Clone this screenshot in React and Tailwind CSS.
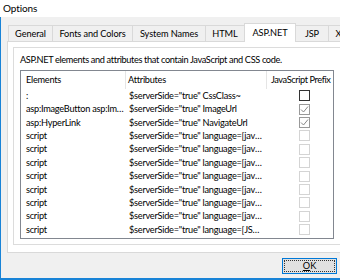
import React from 'react';

const font = { fontFamily: 'Lato, "Noto Sans", sans-serif' };

const tabs = [
  { t: 'General', w: 'w-[45px]' },
  { t: 'Fonts and Colors', w: 'w-[81px]' },
  { t: 'System Names', w: 'w-[74px]' },
  { t: 'HTML', w: 'w-[40px]' },
  { t: 'ASP.NET', w: 'w-[52px]' },
  { t: 'JSP', w: 'w-[34px]' },
  { t: 'XML', w: 'w-[34px]' },
];

const rows = [
  { el: ':', attr: '$serverSide="true" CssClass~', state: 'empty' },
  { el: 'asp:ImageButton asp:ImageMap', attr: '$serverSide="true" ImageUrl', state: 'checked' },
  { el: 'asp:HyperLink', attr: '$serverSide="true" NavigateUrl', state: 'checked' },
  { el: 'script', attr: '$serverSide="true" language=[javascript]', state: 'off' },
  { el: 'script', attr: '$serverSide="true" language=[javascript]', state: 'off' },
  { el: 'script', attr: '$serverSide="true" language=[javascript]', state: 'off' },
  { el: 'script', attr: '$serverSide="true" language=[javascript]', state: 'off' },
  { el: 'script', attr: '$serverSide="true" language=[javascript]', state: 'off' },
  { el: 'script', attr: '$serverSide="true" language=[javascript]', state: 'off' },
  { el: 'script', attr: '$serverSide="true" language=[javascript]', state: 'off' },
  { el: 'script', attr: '$serverSide="true" language=[JScript]', state: 'off' },
];

function Checkbox({ state }) {
  if (state === 'off') {
    return <div className="w-[11px] h-[11px] border border-[#d4d4d4] bg-white" />;
  }
  return (
    <div className={`w-[11px] h-[11px] border bg-white flex items-center justify-center ${state === 'checked' ? 'border-[#999999]' : 'border-[#333333]'}`}>
      {state === 'checked' && (
        <svg width="9" height="9" viewBox="0 0 9 9">
          <path d="M1 4.5 L3.5 7 L8 1.5" fill="none" stroke="#888888" strokeWidth="1" />
        </svg>
      )}
    </div>
  );
}

export default function App() {
  return (
    <div className="w-[340px] h-[280px] overflow-hidden bg-[#f0f0f0] text-[9.2px] tracking-[-0.1px] text-black whitespace-nowrap" style={font}>
      <div className="h-[17px] bg-white flex items-center pl-[3px] text-[10px]">Options</div>
      <div className="h-[263px] border-l border-b-2 border-[#1883d7] flex flex-col">
        {/* tab strip */}
        <div className="flex items-end pl-[7px] pt-[6px] h-[24px]">
          {tabs.map(({ t, w }) => {
            const active = t === 'ASP.NET';
            return (
              <div
                key={t}
                className={`shrink-0 ${w} flex items-center justify-center border-t border-l border-r border-[#d9d9d9] -mr-px ${
                  active ? 'h-[19px] bg-white relative z-10 -mb-px' : 'h-[16px] bg-[#f0f0f0]'
                }`}
              >
                {t}
              </div>
            );
          })}
        </div>
        {/* panel */}
        <div className="ml-[6px] w-[345px] h-[212px] bg-white border border-[#d9d9d9] pt-[5px] pl-[5px]">
          <div className="w-[340px] h-[198px] border border-[#dcdcdc] pl-[6px] pt-[3px]">
            <div className="h-[17px] flex items-center tracking-[-0.35px]">ASP.NET elements and attributes that contain JavaScript and CSS code.</div>
            <div className="mt-[2px] w-[314px] h-[169px] border border-[#828790] bg-white tracking-[-0.25px] overflow-hidden">
              <div className="h-[18px] flex items-center">
                <div className="w-[105px] shrink-0 pl-[5px] border-r border-[#e5e5e5] h-full flex items-center">Elements</div>
                <div className="w-[141px] shrink-0 pl-[2px] border-r border-[#e5e5e5] h-full flex items-center">Attributes</div>
                <div className="pl-[4px] h-full flex items-center tracking-[-0.4px]">JavaScript Prefix</div>
              </div>
              {rows.map((r, i) => (
                <div key={i} className="h-[13.4px] flex items-center">
                  <div className="w-[105px] shrink-0 pl-[5px] pr-[2px] truncate">{r.el}</div>
                  <div className="w-[141px] shrink-0 pl-[3px] pr-[4px] truncate">{r.attr}</div>
                  <div className="w-[74px] shrink-0 flex justify-center">
                    <Checkbox state={r.state} />
                  </div>
                </div>
              ))}
            </div>
          </div>
        </div>
        {/* buttons */}
        <div className="flex justify-end pr-[3px] pt-[5px]">
          <div className="w-[55px] h-[16px] border border-[#0078d7] bg-[#e1e1e1] p-px">
            <div className="w-full h-full border border-dotted border-[#333333] flex items-center justify-center">
              <span><span className="underline">O</span>K</span>
            </div>
          </div>
        </div>
      </div>
    </div>
  );
}
